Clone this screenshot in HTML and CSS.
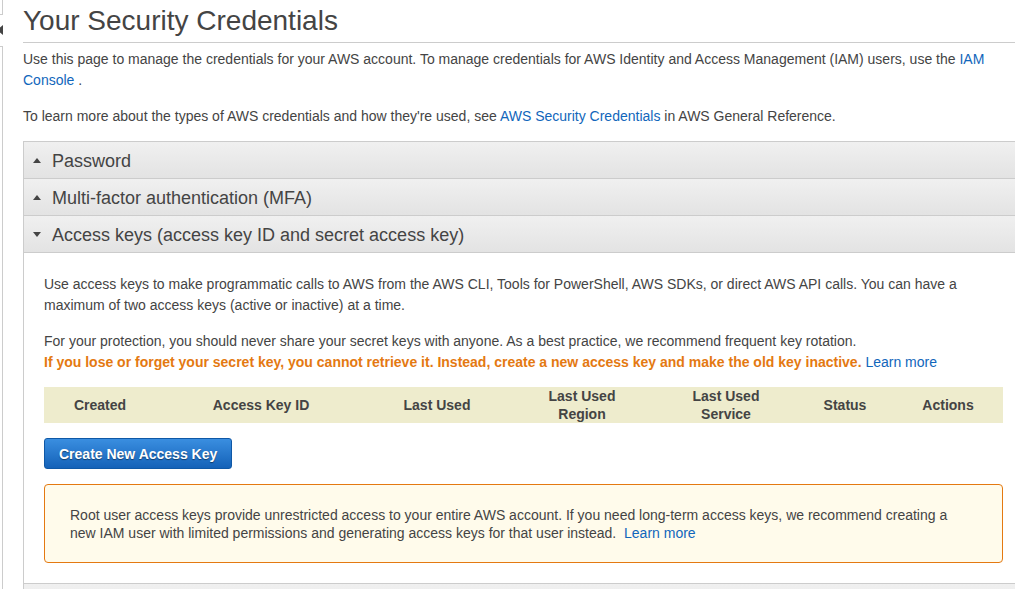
FILE: index.html
```html
<!DOCTYPE html>
<html lang="en">
<head>
<meta charset="utf-8">
<title>Your Security Credentials</title>
<link rel="stylesheet" href="styles.css">
</head>
<body>
<div class="page">
  <aside class="sidebar">
    <div class="side-top"></div>
    <div class="side-toggle"><span class="side-arrow"></span></div>
    <div class="side-rest"></div>
  </aside>
  <main class="main">
    <h1 class="title">Your Security Credentials</h1>
    <p class="intro">Use this page to manage the credentials for your AWS account. To manage credentials for AWS Identity and Access Management (IAM) users, use the <a href="#" class="link">IAM Console</a> .</p>
    <p class="intro">To learn more about the types of AWS credentials and how they're used, see <a href="#" class="link">AWS Security Credentials</a> in AWS General Reference.</p>

    <div class="accordion">
      <div class="acc-header"><span class="caret caret-up"></span><span class="acc-title">Password</span></div>
      <div class="acc-header"><span class="caret caret-up"></span><span class="acc-title">Multi-factor authentication (MFA)</span></div>
      <div class="acc-header"><span class="caret caret-down"></span><span class="acc-title">Access keys (access key ID and secret access key)</span></div>
      <div class="acc-body">
        <p class="body-p">Use access keys to make programmatic calls to AWS from the AWS CLI, Tools for PowerShell, AWS SDKs, or direct AWS API calls. You can have a maximum of two access keys (active or inactive) at a time.</p>
        <p class="body-p body-p2">For your protection, you should never share your secret keys with anyone. As a best practice, we recommend frequent key rotation.<br><strong class="warn-text">If you lose or forget your secret key, you cannot retrieve it. Instead, create a new access key and make the old key inactive.</strong> <a href="#" class="link">Learn more</a></p>
        <div class="keys-table">
          <div class="th">Created</div>
          <div class="th">Access Key ID</div>
          <div class="th">Last Used</div>
          <div class="th">Last Used Region</div>
          <div class="th">Last Used Service</div>
          <div class="th">Status</div>
          <div class="th">Actions</div>
        </div>
        <button class="btn-primary" type="button">Create New Access Key</button>
        <div class="alert">Root user access keys provide unrestricted access to your entire AWS account. If you need long-term access keys, we recommend creating a new IAM user with limited permissions and generating access keys for that user instead.&nbsp; <a href="#" class="link">Learn more</a></div>
      </div>
      <div class="acc-header acc-next"></div>
    </div>
  </main>
</div>
</body>
</html>
```

FILE: styles.css
```css
html, body {
  margin: 0;
  padding: 0;
  overflow: hidden;
  background: #fff;
}

body {
  font-family: "Liberation Sans", Arial, sans-serif;
  font-size: 14px;
  color: #444;
}

.page {
  display: flex;
  align-items: stretch;
  min-height: 589px;
}

.sidebar {
  width: 3px;
  flex: 0 0 3px;
  display: flex;
  flex-direction: column;
}

.side-top {
  height: 14px;
  border-right: 1px solid #ccc;
  border-bottom: 1px solid #ccc;
}

.side-toggle {
  height: 31px;
  display: flex;
  align-items: center;
}

.side-arrow {
  width: 0;
  height: 0;
  margin-left: -3px;
  margin-top: -2px;
  border-top: 5px solid transparent;
  border-bottom: 5px solid transparent;
  border-right: 6px solid #444;
}

.side-rest {
  flex: 1;
  border-top: 1px solid #ccc;
  border-right: 1px solid #ccc;
}

.main {
  flex: 0 0 1000px;
  width: 1000px;
  margin-left: 20px;
}

.title {
  margin: 5px 0 0;
  padding-bottom: 5px;
  font-size: 28px;
  line-height: 32px;
  font-weight: normal;
  color: #444;
  border-bottom: 1px solid #ccc;
}

.intro {
  margin: 6px 0 15px;
  line-height: 21px;
}

.intro + .intro {
  margin-top: 0;
  margin-bottom: 14px;
}

.link {
  color: #1166bb;
  text-decoration: none;
}

.accordion {
  border-left: 1px solid #ccc;
}

.acc-header {
  height: 36px;
  border-top: 1px solid #ccc;
  background: linear-gradient(#f0f0f0, #e3e3e3);
  display: flex;
  align-items: center;
  padding-left: 9px;
}

.acc-title {
  font-size: 18px;
  line-height: 22px;
  color: #444;
  margin-left: 11px;
  padding-top: 1px;
}

.caret {
  width: 0;
  height: 0;
  border-left: 4px solid transparent;
  border-right: 4px solid transparent;
}

.caret-up {
  border-bottom: 5px solid #444;
}

.caret-down {
  border-top: 5px solid #444;
}

.acc-body {
  border-top: 1px solid #ccc;
  padding: 21px 20px 20px;
  background: #fff;
}

.body-p {
  margin: 0 0 15px;
  line-height: 21px;
}

.body-p2 {
  margin-bottom: 14px;
}

.warn-text {
  color: #e47911;
  font-weight: bold;
}

.keys-table {
  display: grid;
  grid-template-columns: 112px 210px 142px 148px 140px 98px 108px;
  background: #eeeccd;
  height: 36px;
  margin-bottom: 15px;
}

.th {
  display: flex;
  align-items: center;
  justify-content: center;
  text-align: center;
  font-weight: bold;
  line-height: 18px;
  padding: 0 16px;
  color: #444;
}

.btn-primary {
  display: block;
  height: 31px;
  padding: 0 14px;
  font-family: "Liberation Sans", Arial, sans-serif;
  font-size: 14px;
  font-weight: bold;
  color: #fff;
  text-shadow: 0 1px 1px rgba(0, 0, 0, 0.45);
  background: linear-gradient(#3a8ee0, #1462b8);
  border: 1px solid #0f58a6;
  border-radius: 3px;
  margin-bottom: 15px;
  cursor: pointer;
}

.alert {
  border: 1px solid #e47911;
  border-radius: 4px;
  background: #fffbeb;
  padding: 21px 45px 20px 25px;
  line-height: 18px;
  color: #444;
}
```
